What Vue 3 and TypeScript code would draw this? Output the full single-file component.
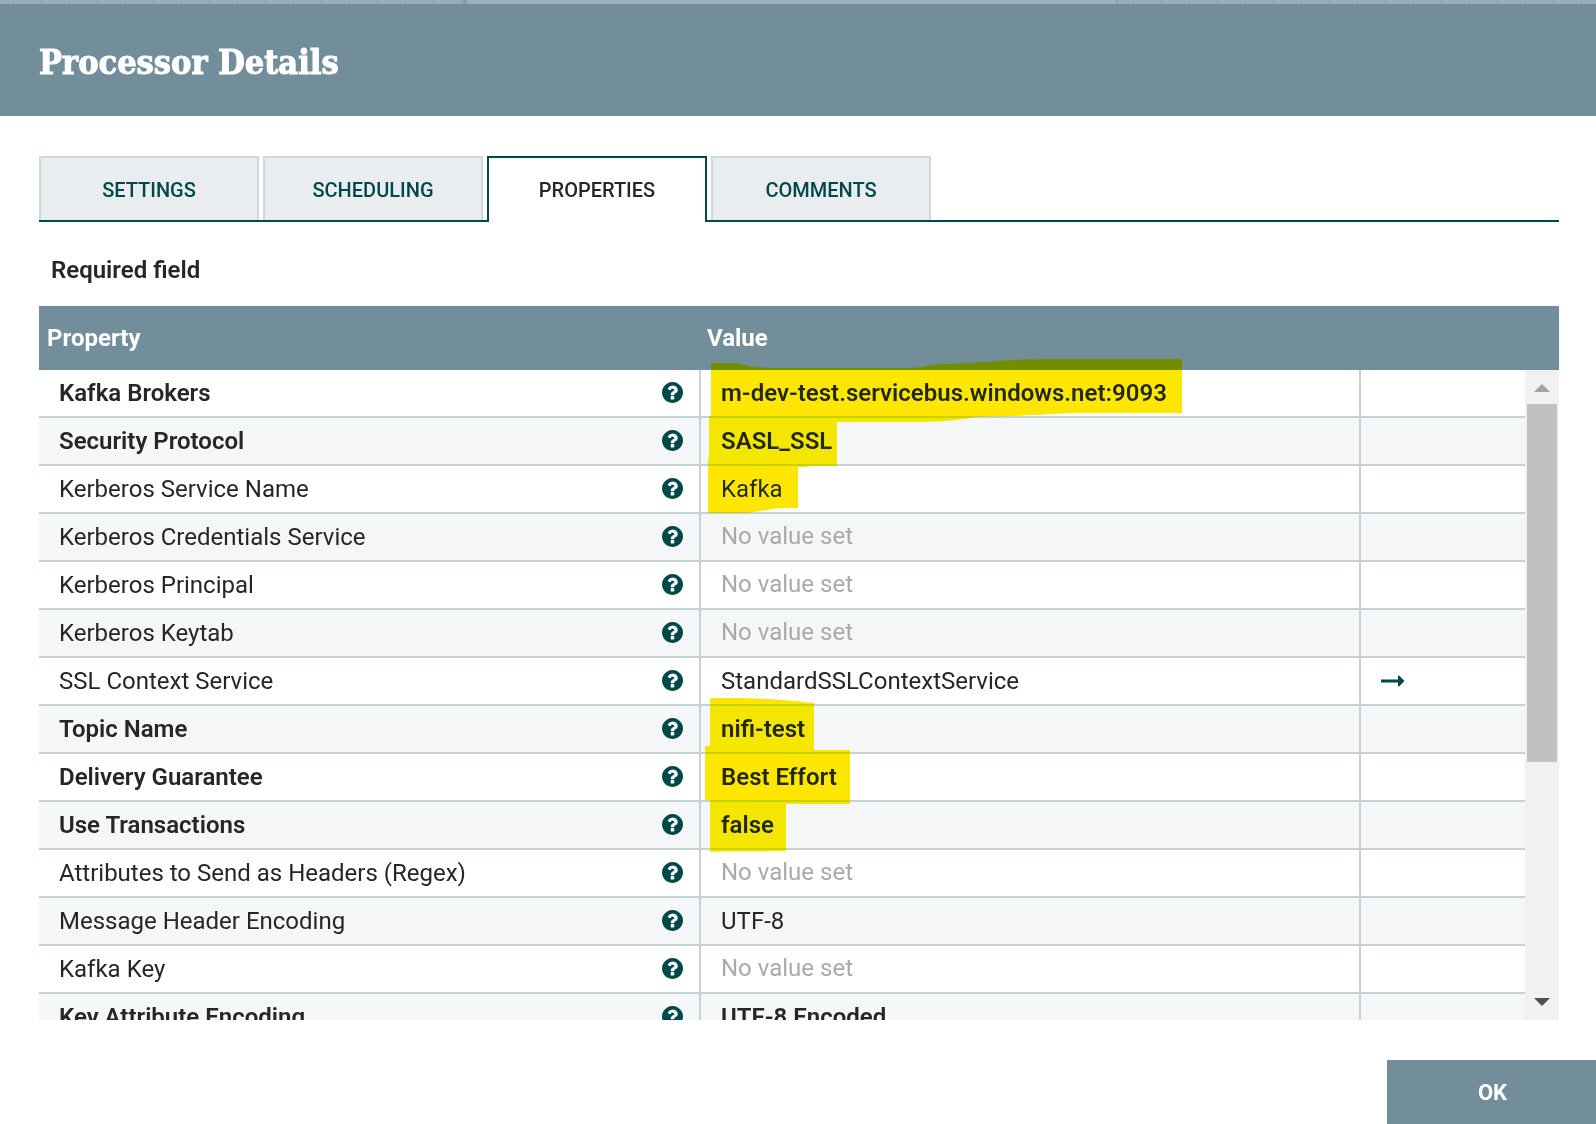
<script setup lang="ts">
import { ref } from 'vue'

interface Property {
  name: string
  value?: string
  required?: boolean
  link?: boolean
}

const tabs = ['SETTINGS', 'SCHEDULING', 'PROPERTIES', 'COMMENTS']
const active = ref('PROPERTIES')

const properties: Property[] = [
  { name: 'Kafka Brokers', value: 'm-dev-test.servicebus.windows.net:9093', required: true },
  { name: 'Security Protocol', value: 'SASL_SSL', required: true },
  { name: 'Kerberos Service Name', value: 'Kafka' },
  { name: 'Kerberos Credentials Service' },
  { name: 'Kerberos Principal' },
  { name: 'Kerberos Keytab' },
  { name: 'SSL Context Service', value: 'StandardSSLContextService', link: true },
  { name: 'Topic Name', value: 'nifi-test', required: true },
  { name: 'Delivery Guarantee', value: 'Best Effort', required: true },
  { name: 'Use Transactions', value: 'false', required: true },
  { name: 'Attributes to Send as Headers (Regex)' },
  { name: 'Message Header Encoding', value: 'UTF-8' },
  { name: 'Kafka Key' },
  { name: 'Key Attribute Encoding', value: 'UTF-8 Encoded', required: true },
]
</script>

<template>
  <main class="dialog">
    <div class="canvas-edge"><div class="canvas-node"></div></div>
    <header class="title-bar"><h1>Processor Details</h1></header>

    <section class="content">
      <nav class="tabs" role="tablist">
        <button
          v-for="tab in tabs"
          :key="tab"
          type="button"
          role="tab"
          class="tab"
          :class="{ active: tab === active }"
          :aria-selected="tab === active"
          @click="active = tab"
        >{{ tab }}</button>
      </nav>

      <p class="legend">Required field</p>

      <div class="grid">
        <div class="viewport">
          <table>
            <colgroup>
              <col class="col-name" /><col class="col-value" /><col class="col-action" />
            </colgroup>
            <thead>
              <tr><th>Property</th><th>Value</th><th aria-label="Actions"></th></tr>
            </thead>
            <tbody>
              <tr v-for="p in properties" :key="p.name" :class="{ required: p.required }">
                <td>
                  <div class="name">
                    <span>{{ p.name }}</span>
                    <svg class="help" viewBox="128 128 1536 1536" aria-hidden="true">
                      <path d="M1024 1376v-192q0-14-9-23t-23-9h-192q-14 0-23 9t-9 23v192q0 14 9 23t23 9h192q14 0 23-9t9-23zm256-672q0-88-55.5-163t-138.5-116-170-41q-243 0-371 213-15 24 8 42l132 100q7 6 19 6 16 0 25-12 53-68 86-92 34-24 86-24 48 0 85.5 26t37.5 59q0 38-20 61t-68 45q-63 28-115.5 86.5t-52.5 125.5v36q0 14 9 23t23 9h192q14 0 23-9t9-23q0-19 21.5-49.5t54.5-49.5q32-18 49-28.5t46-35 44.5-48 28-60.5 12.5-81zm384 192q0 209-103 385.5t-279.5 279.5-385.5 103-385.5-103-279.5-279.5-103-385.5 103-385.5 279.5-279.5 385.5-103 385.5 103 279.5 279.5 103 385.5z" />
                    </svg>
                  </div>
                </td>
                <td :class="{ unset: !p.value }">{{ p.value ?? 'No value set' }}</td>
                <td>
                  <button v-if="p.link" type="button" class="goto" aria-label="Go to service">
                    <svg viewBox="0 0 24 12" aria-hidden="true">
                      <path d="M0 4.5h17V.5h1L23.5 6 18 11.5h-1v-4H0z" />
                    </svg>
                  </button>
                </td>
              </tr>
            </tbody>
          </table>
          <svg class="marker" width="500" height="520" viewBox="0 0 500 520" aria-hidden="true">
            <path d="M11 4H36C46 7 60 9 76 9H206C222 9 226 6 243 5C280 4 310 0 345 0H482V54H383C360 54 345 56 329 56C310 58 290 57 276 58C262 60 250 63 218 63H137V107H112C106 108 102 108 98 108V149H82C66 150 55 154 45 154H8V100H9V57H11Z" />
            <path d="M10 339H36C60 339 92 341 114 344V391H150V445H86V492C60 493 35 492 10 493V441H5V387H10Z" />
          </svg>
        </div>
        <div class="scrollbar" aria-hidden="true">
          <svg class="up" width="16" height="8" viewBox="0 0 16 8"><path d="M0 8L8 0l8 8z" /></svg>
          <div class="thumb"></div>
          <svg class="down" width="16" height="8" viewBox="0 0 16 8"><path d="M0 0h16L8 8z" /></svg>
        </div>
      </div>
    </section>

    <footer><button type="button" class="ok">OK</button></footer>
  </main>
</template>

<style>
body {
  margin: 0;
  background: #fff;
}
</style>

<style scoped>
.dialog {
  font-family: Roboto, sans-serif;
  font-size: 24px;
  line-height: 28px;
  color: #262626;
}
button {
  font-family: inherit;
  cursor: pointer;
}
.canvas-edge {
  height: 4px;
  background: repeating-linear-gradient(90deg, #9cafb6 0 12px, #94a8b0 12px 14px, #9cafb6 14px 28px);
}
.canvas-node {
  box-sizing: border-box;
  width: 41%;
  height: 4px;
  margin-left: 29%;
  border: 0 solid #879ca4;
  border-width: 0 1px 0 4px;
  background: #9fb2b9;
}
.title-bar {
  display: flex;
  align-items: center;
  height: 112px;
  box-sizing: border-box;
  padding: 4px 39px 0;
  background: #728e9b;
}
h1 {
  margin: 0;
  font-family: "Roboto Slab", "DejaVu Serif Condensed", "DejaVu Serif", serif;
  font-size: 34px;
  line-height: 48px;
  font-weight: 700;
  color: #fff;
  -webkit-text-stroke: 1px #fff;
}
.content {
  padding: 40px 37px 0 39px;
}
.tabs {
  display: flex;
  gap: 4px;
  height: 64px;
  border-bottom: 2px solid #004849;
}
.tab {
  box-sizing: border-box;
  width: 220px;
  height: 64px;
  padding: 2px 0 0;
  border: 2px solid #ccdadb;
  border-bottom: 0;
  background: #e9edf0;
  color: #004849;
  font-size: 20px;
  line-height: 24px;
  font-weight: 500;
}
.tab.active {
  height: 66px;
  padding-bottom: 2px;
  border-color: #004849;
  background: #fff;
  color: #262626;
}
.legend {
  margin: 34px 12px 22px;
  font-weight: 600;
}
.grid {
  display: flex;
}
.viewport {
  position: relative;
  flex: 1;
  height: 714px;
  overflow: hidden;
}
table {
  width: 100%;
  table-layout: fixed;
  border-collapse: separate;
  border-spacing: 0;
}
.col-name {
  width: 44.55%;
}
.col-action {
  width: 164px;
}
th {
  box-sizing: border-box;
  height: 64px;
  padding: 0 8px;
  background: #728e9b;
  color: #fff;
  text-align: left;
  font-weight: 700;
}
th + th {
  padding-left: 6px;
}
td {
  box-sizing: border-box;
  height: 48px;
  padding: 0 16px 0 20px;
  border-right: 2px solid #c7d2d7;
  border-bottom: 2px solid #c7d2d7;
  white-space: nowrap;
}
td:last-child {
  border-right: 0;
}
tbody tr:nth-child(even) {
  background: #f4f6f7;
}
.required {
  font-weight: 600;
}
.name {
  display: flex;
  align-items: center;
  justify-content: space-between;
}
.help {
  width: 21px;
  height: 21px;
  margin-bottom: 2px;
  fill: #004849;
}
.unset {
  padding-bottom: 2px;
  color: #aaa;
}
.goto {
  display: block;
  padding: 0;
  border: 0;
  background: none;
}
.goto svg {
  display: block;
  width: 24px;
  height: 12px;
  fill: #004849;
}
.marker {
  position: absolute;
  top: 53px;
  left: calc(50% - 82px);
  fill: #ffe600;
  mix-blend-mode: darken;
  pointer-events: none;
}
.scrollbar {
  box-sizing: border-box;
  display: flex;
  flex-direction: column;
  align-items: center;
  width: 34px;
  height: 714px;
  padding: 14px 0;
  border-top: 64px solid #728e9b;
  background: #f1f1f1;
}
.up {
  fill: #a3a3a3;
}
.thumb {
  width: 30px;
  height: 358px;
  margin: 12px 0 auto;
  background: #c1c1c1;
}
.down {
  fill: #505050;
}
footer {
  display: flex;
  justify-content: flex-end;
  margin-top: 40px;
}
.ok {
  width: 209px;
  height: 64px;
  padding: 2px 0 0 2px;
  border: 0;
  background: #728e9b;
  color: #fff;
  font-size: 22px;
  line-height: 28px;
  font-weight: 700;
}
</style>
